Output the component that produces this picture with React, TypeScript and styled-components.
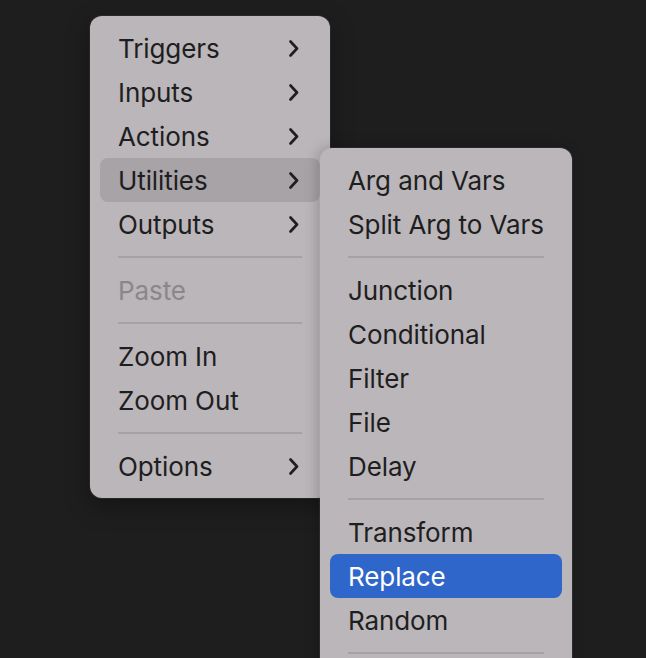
import React from "react";
import styled, { createGlobalStyle } from "styled-components";

const Global = createGlobalStyle`
  html, body { margin: 0; padding: 0; background: #1e1e1e; overflow: hidden; }
  body { font-family: Inter, "Noto Sans", sans-serif; -webkit-font-smoothing: antialiased; }
`;

const Canvas = styled.div`
  width: 646px;
  height: 658px;
  padding: 16px 0 0 90px;
  box-sizing: border-box;
  background: #1e1e1e;
  overflow: hidden;
`;

const Menu = styled.div<{ $width: number }>`
  width: ${(p) => p.$width}px;
  box-sizing: border-box;
  padding: 10px;
  background: #bab6ba;
  border-radius: 12px;
  display: flex;
  flex-direction: column;
  box-shadow: 0 0 0 1px rgba(255, 255, 255, 0.06), 0 8px 24px rgba(0, 0, 0, 0.35);
`;

const SubMenu = styled(Menu)`
  position: absolute;
  left: 100%;
  top: -10px;
  z-index: 2;
  padding-bottom: 40px;
  box-shadow: -2px 0 14px rgba(0, 0, 0, 0.22), 0 0 0 1px rgba(255, 255, 255, 0.08);
`;

const Row = styled.div<{ $state?: "hover" | "active" | "disabled" }>`
  position: relative;
  height: 44px;
  box-sizing: border-box;
  display: flex;
  align-items: center;
  justify-content: space-between;
  padding: 1px 21px 0 18px;
  border-radius: 8px;
  font-size: 26px;
  letter-spacing: -0.1px;
  white-space: nowrap;
  color: ${(p) =>
    p.$state === "disabled" ? "#8a878a" : p.$state === "active" ? "#ffffff" : "#1e1e1e"};
  background: ${(p) =>
    p.$state === "hover" ? "#a7a3a7" : p.$state === "active" ? "#2f66c9" : "transparent"};
`;

const Separator = styled.div`
  height: 2px;
  margin: 10px 18px;
  background: #a5a1a5;
`;

const Chevron = () => (
  <svg width="10" height="17" viewBox="0 0 10 17" fill="none">
    <path d="M1.5 1.5 L8 8.5 L1.5 15.5" stroke="#1e1e1e" strokeWidth="2.6" strokeLinecap="round" strokeLinejoin="round" />
  </svg>
);

type Item = { label: string; sub?: boolean; state?: "hover" | "active" | "disabled" } | "sep";

const subItems: Item[] = [
  { label: "Arg and Vars" },
  { label: "Split Arg to Vars" },
  "sep",
  { label: "Junction" },
  { label: "Conditional" },
  { label: "Filter" },
  { label: "File" },
  { label: "Delay" },
  "sep",
  { label: "Transform" },
  { label: "Replace", state: "active" },
  { label: "Random" },
  "sep",
];

const mainItems: Item[] = [
  { label: "Triggers", sub: true },
  { label: "Inputs", sub: true },
  { label: "Actions", sub: true },
  { label: "Utilities", sub: true, state: "hover" },
  { label: "Outputs", sub: true },
  "sep",
  { label: "Paste", state: "disabled" },
  "sep",
  { label: "Zoom In" },
  { label: "Zoom Out" },
  "sep",
  { label: "Options", sub: true },
];

export default function App() {
  return (
    <>
      <Global />
      <Canvas>
        <Menu $width={240}>
          {mainItems.map((it, i) =>
            it === "sep" ? (
              <Separator key={i} />
            ) : (
              <Row key={i} $state={it.state}>
                <span>{it.label}</span>
                {it.sub && <Chevron />}
                {it.state === "hover" && (
                  <SubMenu $width={252}>
                    {subItems.map((s, j) =>
                      s === "sep" ? (
                        <Separator key={j} />
                      ) : (
                        <Row key={j} $state={s.state}>
                          <span>{s.label}</span>
                        </Row>
                      )
                    )}
                  </SubMenu>
                )}
              </Row>
            )
          )}
        </Menu>
      </Canvas>
    </>
  );
}
